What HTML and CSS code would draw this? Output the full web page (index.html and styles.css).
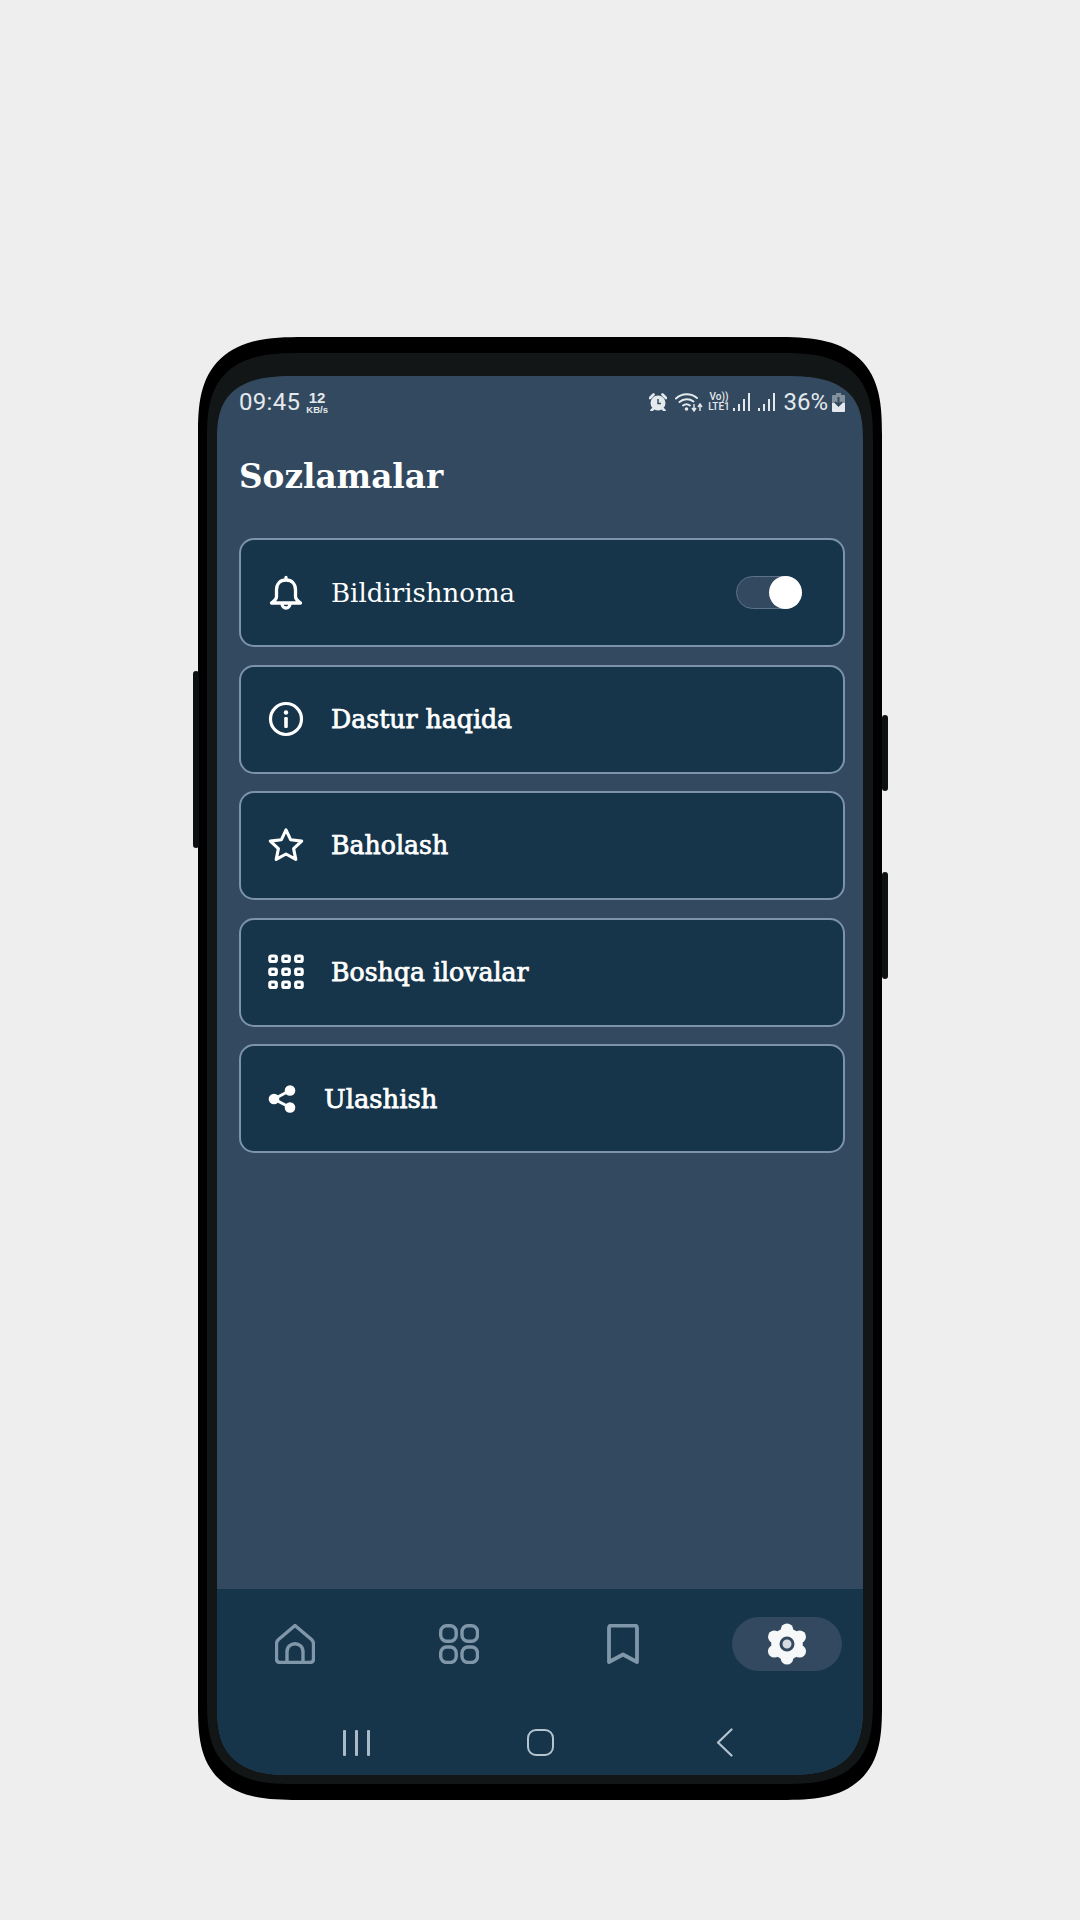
FILE: index.html
```html
<!DOCTYPE html>
<html lang="uz">
<head>
<meta charset="utf-8">
<title>Sozlamalar</title>
<link rel="stylesheet" href="styles.css">
</head>
<body>
<div class="phone">
  <span class="side side-left"></span>
  <span class="side side-right-a"></span>
  <span class="side side-right-b"></span>
  <div class="bezel">
    <div class="screen">
      <div class="status">
        <div class="status-left">
          <span class="time">09:45</span>
          <span class="speed"><b>12</b><i>KB/s</i></span>
        </div>
        <div class="status-right">
          <svg class="st-alarm" viewBox="0 0 18 18"><path d="M1 5 4.500 1.500M17 5l-3.500-3.500M4 16l-1.500 1.500M14 16l1.500 1.500" fill="none" stroke="currentColor" stroke-width="2.600" stroke-linecap="round"/><circle cx="9" cy="10" r="7.500" fill="currentColor"/><path d="M9 6v4.500h3" fill="none" stroke="#33495f" stroke-width="1.500"/></svg>
          <svg class="st-wifi" viewBox="0 0 28 20"><g fill="none" stroke="currentColor" stroke-width="2" stroke-linecap="round"><path d="M1 6.500C7 1 16 1 22 6"/><path d="M4.500 10c4-3.500 10-3.500 14-.5"/><path d="M8 13.500c2-1.500 5-1.500 7 0"/></g><circle cx="11.500" cy="17" r="1.800" fill="currentColor"/><path d="M19 12v6M17 16l2 3 2-3M25 19v-6M23 15l2-3 2 3" fill="none" stroke="currentColor" stroke-width="1.400"/></svg>
          <span class="volte"><span>Vo))</span><span>LTE1</span></span>
          <svg class="st-signal" viewBox="0 0 17 18"><g fill="currentColor"><rect x="0" y="15" width="2" height="3"/><rect x="5" y="11" width="2" height="7"/><rect x="10" y="6" width="2" height="12"/><rect x="15" y="0" width="2" height="18"/></g></svg>
          <svg class="st-signal" viewBox="0 0 17 18"><g fill="currentColor"><rect x="0" y="15" width="2" height="3"/><rect x="5" y="11" width="2" height="7"/><rect x="10" y="6" width="2" height="12"/><rect x="15" y="0" width="2" height="18"/></g></svg>
          <span class="percent">36%</span>
          <svg class="st-battery" viewBox="0 0 13 19"><path d="M4 0h5v2h3a1 1 0 0 1 1 1v7H0V3a1 1 0 0 1 1-1h3z" fill="currentColor" opacity=".45"/><path d="M0 10h13v8a1 1 0 0 1-1 1H1a1 1 0 0 1-1-1z" fill="currentColor"/><path d="M6.500 4v7M3 9l3.500 3.500L10 9" fill="none" stroke="#33495f" stroke-width="2"/></svg>
        </div>
      </div>
      <main class="content">
        <h1 class="title">Sozlamalar</h1>
        <ul class="list">
          <li class="card">
            <svg class="icon" viewBox="0 0 36 36"><path d="M18 5c-6 0-9.500 4.200-9.500 9.700v7c0 3-2.500 4.300-5 6.300h29c-2.500-2-5-3.300-5-6.300v-7C27.500 9.200 24 5 18 5zM18 5V2.500M14 28.500c0 6 8 6 8 0" fill="none" stroke="#fff" stroke-width="3.300" stroke-linejoin="round" stroke-linecap="round"/></svg>
            <span class="label label-light">Bildirishnoma</span>
            <span class="toggle"><span class="thumb"></span></span>
          </li>
          <li class="card">
            <svg class="icon" viewBox="0 0 36 36"><circle cx="18" cy="18" r="15.500" fill="none" stroke="#fff" stroke-width="3.200"/><circle cx="18" cy="11.500" r="2.200" fill="#fff"/><rect x="16.200" y="16" width="3.600" height="11" rx="1.200" fill="#fff"/></svg>
            <span class="label">Dastur haqida</span>
          </li>
          <li class="card">
            <svg class="icon icon-star" viewBox="0 0 36 36"><path d="m18 2.800 4.700 10 11 1.300-8.100 7.500 2.200 10.800-9.800-5.400-9.800 5.400 2.200-10.800-8.100-7.500 11-1.300z" fill="none" stroke="#fff" stroke-width="3.100" stroke-linejoin="round"/></svg>
            <span class="label">Baholash</span>
          </li>
          <li class="card">
            <svg class="icon" viewBox="0 0 36 36"><g fill="none" stroke="#fff" stroke-width="3.200"><rect x="1.800" y="2" width="6.500" height="5.500" rx="1.500"/><rect x="14.800" y="2" width="6.500" height="5.500" rx="1.500"/><rect x="27.700" y="2" width="6.500" height="5.500" rx="1.500"/><rect x="1.800" y="15" width="6.500" height="5.500" rx="1.500"/><rect x="14.800" y="15" width="6.500" height="5.500" rx="1.500"/><rect x="27.700" y="15" width="6.500" height="5.500" rx="1.500"/><rect x="1.800" y="28" width="6.500" height="5.500" rx="1.500"/><rect x="14.800" y="28" width="6.500" height="5.500" rx="1.500"/><rect x="27.700" y="28" width="6.500" height="5.500" rx="1.500"/></g></svg>
            <span class="label">Boshqa ilovalar</span>
          </li>
          <li class="card">
            <svg class="icon icon-share" viewBox="0 0 28 28"><path d="M22 5.500 6 14l16 8.500" fill="none" stroke="#fff" stroke-width="3"/><circle cx="22" cy="5.500" r="5.300" fill="#fff"/><circle cx="6" cy="14" r="5.300" fill="#fff"/><circle cx="22" cy="22.500" r="5.300" fill="#fff"/></svg>
            <span class="label label-share">Ulashish</span>
          </li>
        </ul>
      </main>
      <footer class="bottom">
        <nav class="tabs">
          <span class="tab">
            <svg class="tab-icon" viewBox="0 0 40 40"><path d="M20 1.500 3.500 15.500c-1.500 1.300-2 2.500-2 4.500v15c0 2.500 1.500 3.500 3.500 3.500h30c2 0 3.500-1 3.500-3.500V20c0-2-.5-3.200-2-4.500zM12 38.500V28c0-11 16-11 16 0v10.500" fill="none" stroke="#7f97a8" stroke-width="3.400" stroke-linejoin="round"/></svg>
          </span>
          <span class="tab">
            <svg class="tab-icon" viewBox="0 0 40 40"><g fill="none" stroke="#7f97a8" stroke-width="3.400"><rect x="1.700" y="1.700" width="15.500" height="15.500" rx="6"/><rect x="23" y="1.700" width="15.500" height="15.500" rx="6"/><rect x="1.700" y="23" width="15.500" height="15.500" rx="6"/><rect x="23" y="23" width="15.500" height="15.500" rx="6"/></g></svg>
          </span>
          <span class="tab">
            <svg class="tab-icon tab-mark" viewBox="0 0 32 40"><path d="M2 38V4c0-1.500 1-2.500 2.500-2.500h23C29 1.500 30 2.500 30 4v34L16 30.500z" fill="none" stroke="#7f97a8" stroke-width="3.800" stroke-linejoin="round"/></svg>
          </span>
          <span class="tab tab-active">
            <svg class="tab-gear" viewBox="0 0 42 42"><g fill="#f7f8f9"><circle cx="21" cy="21" r="15.800"/><circle cx="21" cy="6.800" r="6.300"/><circle cx="21" cy="35.200" r="6.300"/><circle cx="8.300" cy="13.800" r="6.300"/><circle cx="33.700" cy="13.800" r="6.300"/><circle cx="8.300" cy="28.200" r="6.300"/><circle cx="33.700" cy="28.200" r="6.300"/></g><circle cx="21" cy="21" r="6" fill="#d5dde3" stroke="#33495f" stroke-width="3"/></svg>
          </span>
        </nav>
        <div class="sysnav">
          <span class="sys sys-recent"><i></i><i></i><i></i></span>
          <span class="sys"><span class="sys-home"></span></span>
          <span class="sys"><svg class="sys-back" viewBox="0 0 17 29"><path d="M15.500 1.500 2 14.500l13.500 13" fill="none" stroke="#b4c4d0" stroke-width="2.200" stroke-linecap="round" stroke-linejoin="round"/></svg></span>
        </div>
      </footer>
    </div>
  </div>
</div>
</body>
</html>
```

FILE: styles.css
```css
* { box-sizing: border-box; }
html, body { margin: 0; padding: 0; }
body {
  width: 1080px;
  height: 1920px;
  background: #eeeeee;
  padding: 337px 198px 0;
  font-family: "DejaVu Serif", serif;
  overflow: hidden;
}
.phone {
  position: relative;
  width: 684px;
  height: 1463px;
  background: #000;
  border-radius: 106px 106px 100px 100px / 98px 98px 94px 94px;
  corner-shape: superellipse(1.5);
  padding: 16px 9px 16px;
}
.side {
  position: absolute;
  width: 6px;
  background: #0d1010;
  border-radius: 3px;
}
.side-left { left: -5px; top: 334px; height: 177px; }
.side-right-a { right: -6px; top: 378px; height: 76px; }
.side-right-b { right: -6px; top: 535px; height: 107px; }
.bezel {
  height: 100%;
  background: #121616;
  border-radius: 94px 94px 90px 90px / 86px 86px 84px 84px;
  corner-shape: superellipse(1.5);
  padding: 23px 10px 9px;
}
.screen {
  height: 100%;
  background: #33495f;
  border-radius: 80px 80px 78px 78px / 66px 66px 72px 72px;
  corner-shape: superellipse(1.5);
  overflow: hidden;
  display: flex;
  flex-direction: column;
}
.status {
  display: flex;
  justify-content: space-between;
  align-items: center;
  height: 30px;
  margin-top: 11px;
  padding: 0 18px 0 22px;
  color: #e4e9ed;
  font-family: Roboto, sans-serif;
}
.status-left, .status-right { display: flex; align-items: center; }
.time { font-size: 24px; letter-spacing: .3px; }
.speed {
  display: flex;
  flex-direction: column;
  align-items: center;
  margin-left: 6px;
  font-family: "Liberation Sans", sans-serif;
}
.speed b { font-size: 15px; line-height: 14px; }
.speed i { font-size: 9.500px; line-height: 9px; font-style: normal; font-weight: 700; }
.st-alarm { width: 18px; height: 18px; }
.st-wifi { width: 28px; height: 20px; margin-left: 8px; }
.volte {
  display: flex;
  flex-direction: column;
  align-items: center;
  margin-left: 3px;
  font-size: 10px;
  line-height: 10px;
  font-weight: 500;
  width: 25px;
}
.st-signal { width: 17px; height: 18px; margin-left: 2px; }
.st-signal + .st-signal { margin-left: 8px; }
.percent { font-size: 24px; margin-left: 8px; }
.st-battery { width: 13px; height: 19px; margin-left: 4px; }
.content {
  flex: 1;
  padding: 0 18px 0 22px;
  color: #fff;
}
.title {
  margin: 35px 0 0;
  font-size: 32.700px;
  line-height: 50px;
  font-weight: 700;
}
.list {
  list-style: none;
  margin: 36px 0 0;
  padding: 0;
  display: flex;
  flex-direction: column;
  gap: 17.500px;
}
.card {
  height: 109px;
  background: #16354a;
  border: 2px solid #7c93a9;
  border-radius: 15px;
  padding: 0 41px 0 27px;
  display: flex;
  align-items: center;
}
.icon { width: 36px; height: 36px; flex: none; }
.icon-star { margin-top: -2px; }
.icon-share { width: 28px; height: 28px; }
.label {
  margin-left: 27px;
  font-size: 25.200px;
  -webkit-text-stroke: .75px #fff;
  white-space: nowrap;
}
.label-light { font-size: 26px; -webkit-text-stroke: 0; }
.label-share { margin-left: 28px; font-size: 25.800px; }
.toggle {
  position: relative;
  margin-left: auto;
  width: 66px;
  height: 33px;
  background: #33495f;
  border: 1px solid #5d7389;
  border-radius: 17px;
}
.thumb {
  position: absolute;
  right: -1px;
  top: -1px;
  width: 33px;
  height: 33px;
  border-radius: 50%;
  background: #fff;
}
.bottom {
  height: 186px;
  background: #16354a;
  padding-top: 28px;
}
.tabs {
  display: flex;
  gap: 54px;
  padding: 0 21px 0 23px;
}
.tab {
  width: 110px;
  height: 54px;
  border-radius: 27px;
  display: flex;
  align-items: center;
  justify-content: center;
}
.tab-active { background: #33495f; }
.tab-icon { width: 40px; height: 40px; }
.tab-mark { width: 32px; }
.tab-gear { width: 42px; height: 42px; }
.sysnav {
  display: grid;
  grid-template-columns: repeat(3, 184px);
  justify-content: center;
  align-items: center;
  margin-top: 57px;
  height: 28px;
}
.sys { display: flex; justify-content: center; align-items: center; }
.sys-recent { gap: 9px; }
.sys-recent i { width: 3px; height: 26px; background: #a9bbc8; border-radius: 1px; }
.sys-home {
  width: 27px;
  height: 27px;
  border: 2px solid #b4c4d0;
  border-radius: 9px;
}
.sys-back { width: 17px; height: 29px; }
```
